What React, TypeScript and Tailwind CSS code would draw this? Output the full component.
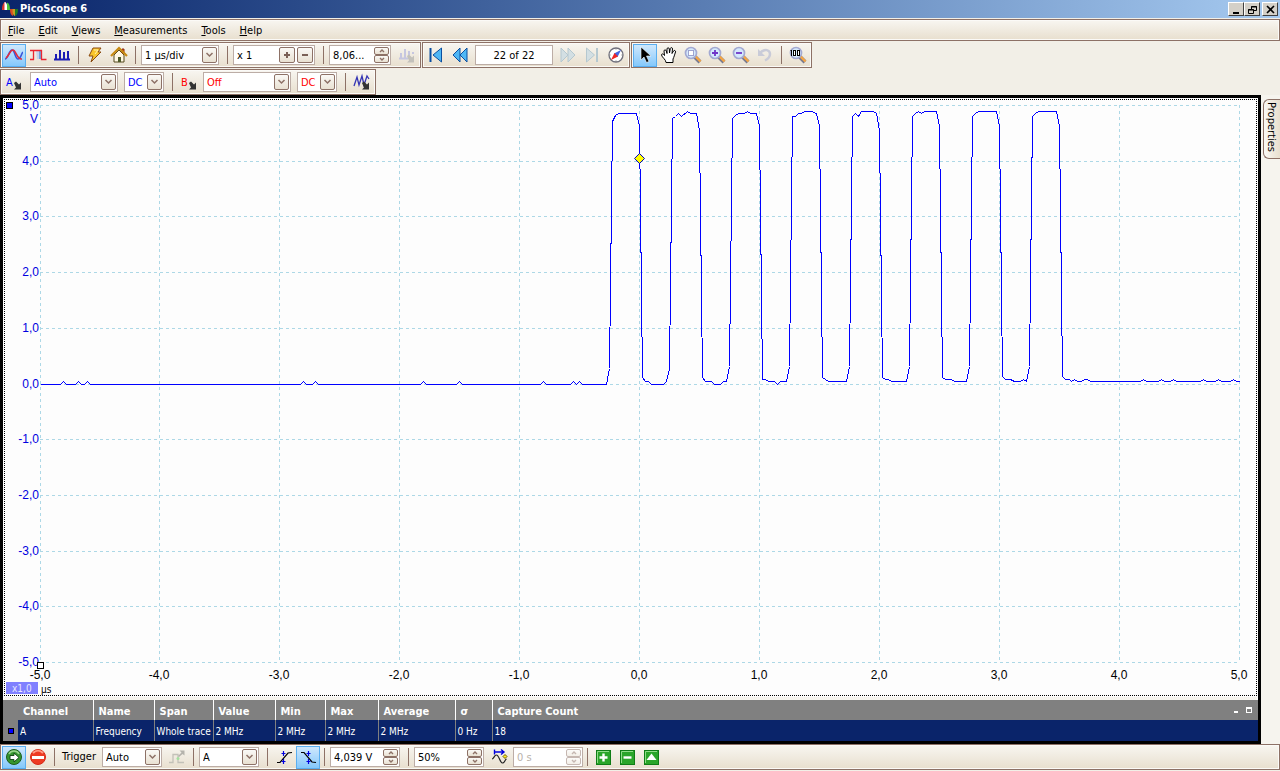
import React from 'react'
import clsx from 'clsx'

/* ---------- Chart data (sample points on the scope canvas) ---------- */

const BLIPS_BEFORE = [63, 78, 87, 303, 315, 423, 459, 543, 573, 579]
const BLIPS_AFTER = [1143, 1161, 1173, 1203, 1218, 1233]

const PULSES = [
    [606, 384, 609, 368, 612, 121, 615, 115, 618, 113, 636, 113, 639, 126, 642, 377, 645, 381, 648, 381, 651, 384, 663, 384],
    [666, 381, 669, 368, 672, 118, 675, 116, 678, 113, 681, 116, 687, 111, 690, 113, 696, 113, 699, 130, 702, 377, 705, 381, 711, 381, 714, 384, 720, 384, 723, 381],
    [726, 381, 729, 366, 732, 118, 735, 115, 738, 113, 744, 113, 747, 111, 750, 113, 756, 113, 759, 126, 762, 379, 765, 379, 768, 381, 774, 381, 777, 384, 780, 381],
    [786, 381, 789, 366, 792, 116, 795, 116, 798, 113, 801, 113, 804, 111, 811, 111, 816, 113, 819, 126, 822, 377, 825, 379, 828, 381],
    [846, 381, 849, 366, 852, 116, 855, 113, 858, 116, 861, 111, 873, 111, 876, 113, 879, 130, 882, 377, 885, 379, 888, 379, 891, 381],
    [906, 381, 909, 366, 912, 116, 915, 113, 918, 111, 921, 113, 924, 111, 936, 111, 939, 126, 942, 377, 945, 379, 951, 379, 954, 381],
    [966, 381, 969, 366, 972, 116, 975, 113, 978, 111, 996, 111, 999, 126, 1002, 376, 1005, 379, 1010, 379, 1014, 381, 1020, 381, 1023, 379],
    [1026, 381, 1029, 366, 1032, 116, 1035, 113, 1038, 111, 1056, 111, 1059, 126, 1062, 376, 1065, 379, 1069, 379, 1071, 381, 1074, 379, 1077, 381, 1081, 381, 1084, 379, 1087, 379, 1090, 381],
]

function tracePoints() {
    const pts: number[] = [40, 384]
    BLIPS_BEFORE.forEach((x) => pts.push(x - 3, 384, x, 381, x + 3, 384))
    PULSES.forEach((p) => pts.push(...p))
    BLIPS_AFTER.forEach((x) => pts.push(x - 3, 381, x, 379, x + 3, 381))
    pts.push(1239, 381)
    return pts.map((v) => v + 0.5).join(' ')
}

const X_TICKS = [-5, -4, -3, -2, -1, 0, 1, 2, 3, 4, 5].map((v, i) => ({
    label: `${v},0`,
    pos: Math.floor(40 + i * 119.95),
}))
const Y_TICKS = [5, 4, 3, 2, 1, 0, -1, -2, -3, -4, -5].map((v, i) => ({
    label: `${v},0`,
    pos: Math.round(105 + i * 55.7),
}))

const COLUMNS = [
    { head: 'Channel', value: 'A', width: 'w-[75px]' },
    { head: 'Name', value: 'Frequency', width: 'w-[61px]' },
    { head: 'Span', value: 'Whole trace', width: 'w-[59px]' },
    { head: 'Value', value: '2 MHz', width: 'w-[62px]' },
    { head: 'Min', value: '2 MHz', width: 'w-[50px]' },
    { head: 'Max', value: '2 MHz', width: 'w-[53px]' },
    { head: 'Average', value: '2 MHz', width: 'w-[77px]' },
    { head: 'σ', value: '0 Hz', width: 'w-[37px]' },
    { head: 'Capture Count', value: '18', width: '' },
]

/* ---------- Toolbar building blocks ---------- */

function Toolbar({ label, className, children }: { label: string; className?: string; children: React.ReactNode }) {
    return (
        <div
            role="toolbar"
            aria-label={label}
            className={clsx(
                'flex h-[26px] shrink-0 items-center border border-[#8d7166] bg-gradient-to-b from-[#f8f6f1] to-[#e8dfce] px-px shadow-[inset_0_0_0_1px_#fbfaf7]',
                className
            )}
        >
            {children}
        </div>
    )
}

function ToolButton({ label, active, disabled, children }: { label: string; active?: boolean; disabled?: boolean; children: React.ReactNode }) {
    return (
        <button
            type="button"
            aria-label={label}
            disabled={disabled}
            className={clsx(
                'flex h-[23px] w-6 shrink-0 items-center justify-center border',
                active ? 'border-[#5aaef0] bg-gradient-to-b from-[#cfe8fc] to-[#84c8fb]' : 'border-transparent'
            )}
        >
            <svg width="18" height="18" viewBox="0 0 18 18" fill="none">
                {children}
            </svg>
        </button>
    )
}

function Separator() {
    return <span className="mx-1 h-[18px] w-px shrink-0 bg-[#8d7166]" />
}

const BOX = 'relative flex h-5 shrink-0 items-center border border-[#bcada6] bg-white'
const MINI = 'flex items-center justify-center rounded-[2px] border border-[#8d7166] bg-gradient-to-b from-[#faf9f6] to-[#e9e1d2]'

function Combo({ id, label, value, className }: { id?: string; label?: string; value: string; className: string }) {
    return (
        <div className={clsx(BOX, className)}>
            <select id={id} aria-label={label} defaultValue={value} className="h-full w-full appearance-none bg-transparent pt-px pl-[3px] outline-none">
                <option>{value}</option>
            </select>
            <span className={clsx(MINI, 'pointer-events-none absolute right-px h-4 w-[15px]')}>
                <svg width="9" height="6" viewBox="0 0 9 6" fill="none" stroke="#8d7166" strokeWidth="1.5">
                    <path d="M1.5 1l3 3 3-3" />
                </svg>
            </span>
        </div>
    )
}

function Spinner({ label, value, disabled, className }: { label: string; value: string; disabled?: boolean; className: string }) {
    return (
        <div className={clsx(BOX, className, disabled && 'bg-[#f4f1eb] text-[#b9b2aa]')}>
            <input aria-label={label} defaultValue={value} disabled={disabled} className="h-full w-0 flex-1 bg-transparent pl-[3px] outline-none" />
            <div className={clsx('mr-px flex w-[15px] flex-col', disabled && 'opacity-50')}>
                {['M1 3l2-2 2 2', 'M1 1l2 2 2-2'].map((d) => (
                    <button key={d} type="button" disabled={disabled} aria-label={`${label} step`} className={clsx(MINI, 'h-2')}>
                        <svg width="6" height="4" viewBox="0 0 6 4" fill="none" stroke="#8d7166">
                            <path d={d} strokeWidth="1.4" />
                        </svg>
                    </button>
                ))}
            </div>
        </div>
    )
}

/* ---------- Icons ---------- */

function Magnifier({ children }: { children?: React.ReactNode }) {
    return (
        <>
            <path d="M10.500 10.500L16 16" stroke="#777a90" strokeWidth="4" />
            <path d="M11.500 10.500l5 5" stroke="#f5a544" strokeWidth="2.400" />
            <circle cx="7" cy="7" r="5.500" fill="#d4e9fd" stroke="#a3a9d2" strokeWidth="1.700" />
            {children}
        </>
    )
}

function ProbeArrow({ fill = '#333' }: { fill?: string }) {
    return <path d="M9 10l2-1.500 3 3 2-2v7H9l2-2z" fill={fill} />
}

function GreenBox({ children }: { children: React.ReactNode }) {
    return (
        <>
            <rect x="1.500" y="2.500" width="14" height="14" fill="#2aa52a" stroke="#0f7d16" />
            <path d="M2.500 15V3.500H14" stroke="#8fdc88" />
            {children}
        </>
    )
}

function AppLogo() {
    return (
        <svg width="16" height="16" viewBox="0 0 16 16">
            <path d="M0 9Q0 1 4 1v8z" fill="#d9342b" />
            <path d="M2.500 9V1q3 0 3 8z" fill="#fff" />
            <path d="M5 9V1.500Q8 2 8 9z" fill="#4cc43a" />
            <path d="M8 8h3v7Q8 14 8 8z" fill="#d94a22" />
            <path d="M10.500 8h2.500v7q-2.500 0-2.500-7z" fill="#c99a22" />
            <path d="M13 8h3q0 6-3 7z" fill="#1d7a25" />
        </svg>
    )
}

/* ---------- Sections ---------- */

function TitleBar() {
    return (
        <header className="flex h-[18px] shrink-0 items-center bg-gradient-to-r from-[#0a246a] to-[#a6caf0] pr-0.5 pl-0.5 text-white">
            <AppLogo />
            <h1 className="ml-0.5 flex-1 font-bold">PicoScope 6</h1>
            {[
                { label: 'Minimize', d: 'M3 9h6', w: 2, ml: '' },
                { label: 'Restore', d: 'M5.5 5V2.5h5v4H8M5 3h6M2.5 5.5h5v4h-5zM2 6h6', w: 1, ml: '' },
                { label: 'Close', d: 'M3 2l7 7M10 2L3 9', w: 1.6, ml: 'ml-0.5' },
            ].map((b) => (
                <button
                    key={b.label}
                    type="button"
                    aria-label={b.label}
                    className={clsx('flex h-3.5 w-4 items-center justify-center border border-t-white border-r-[#404040] border-b-[#404040] border-l-white bg-[#d4d0c8]', b.ml)}
                >
                    <svg width="13" height="11" viewBox="0 0 13 11" fill="none" stroke="#000" strokeWidth={b.w}>
                        <path d={b.d} />
                    </svg>
                </button>
            ))}
        </header>
    )
}

function MenuBar() {
    return (
        <nav className="mt-px flex h-[22px] shrink-0 items-center gap-3.5 border border-[#8d7166] bg-gradient-to-b from-[#f8f6f1] to-[#e8dfce] pt-0.5 pl-[7px] shadow-[inset_0_0_0_1px_#fbfaf7]">
            {['File', 'Edit', 'Views', 'Measurements', 'Tools', 'Help'].map((item) => (
                <a key={item} href="#">
                    <span className="underline">{item[0]}</span>
                    {item.slice(1)}
                </a>
            ))}
        </nav>
    )
}

function CaptureToolbar() {
    return (
        <Toolbar label="Capture setup">
            <ToolButton label="Scope mode" active>
                <path d="M0 13C3 13 4 4 7 4s3 9 6 9 3-5 5-7" stroke="#3a55d8" strokeWidth="1.6" />
                <path d="M1 12C4 10 5 4 8 4s4 10 9 9" stroke="#e22b3c" strokeWidth="1.6" />
            </ToolButton>
            <ToolButton label="Persistence mode">
                <path d="M9 4h4v9h-4z" fill="#6fa5dc" />
                <path d="M7 4h3v9H8z" fill="#c5d3ea" />
                <path d="M1 4.500h12M4.500 4v10M1 13.500h4M12.500 4v9.500h5" stroke="#ea2630" strokeWidth="1.300" />
            </ToolButton>
            <ToolButton label="Spectrum mode">
                <path d="M1 13.500h16M3 13V8M7 13V4M11 13V6M15 13V5" stroke="#1c1cb4" strokeWidth="2" />
            </ToolButton>
            <Separator />
            <ToolButton label="Auto setup">
                <path d="M7 2h8l-3 4h3L5 16l2-6H3z" fill="#f9c52b" stroke="#8a4b12" />
                <path d="M8 4h4L9 8" stroke="#fff3b0" />
            </ToolButton>
            <ToolButton label="Home">
                <path d="M4 9v7h10V9L9 4z" fill="#fff8e4" stroke="#55481d" />
                <path d="M12 3h2v4h-2z" fill="#d8502c" stroke="#8b2a10" />
                <path d="M1 10l8-8 8 8" stroke="#c68a12" strokeWidth="2.2" />
                <path d="M8 11h3v5H8z" fill="#4d5a28" />
            </ToolButton>
            <Separator />
            <Combo label="Timebase" value="1 µs/div" className="mr-1 ml-px w-[78px]" />
            <Separator />
            <div className={clsx(BOX, 'mr-1 ml-px w-[82px] gap-0.5 pr-px')}>
                <input aria-label="Horizontal zoom" defaultValue="x 1" className="h-full w-0 flex-1 bg-transparent pl-[3px] outline-none" />
                <button type="button" aria-label="Zoom more" className={clsx(MINI, 'h-4 w-4')}>
                    <svg width="8" height="8" viewBox="0 0 8 8" stroke="#7a6056" strokeWidth="2"><path d="M4 1v6M1 4h6" /></svg>
                </button>
                <button type="button" aria-label="Zoom less" className={clsx(MINI, 'h-4 w-4')}>
                    <svg width="8" height="8" viewBox="0 0 8 8" stroke="#7a6056" strokeWidth="2"><path d="M1 4h6" /></svg>
                </button>
            </div>
            <Separator />
            <Spinner label="Samples" value="8,06..." className="mr-1 ml-px w-[62px]" />
            <ToolButton label="Spectrum options" disabled>
                <path d="M1 12.500h9M3 12V7M7 12V3M11 9V5M15 8V6" stroke="#c6c6e0" strokeWidth="2" />
                <ProbeArrow fill="#c3c1bb" />
            </ToolButton>
        </Toolbar>
    )
}

function BufferToolbar() {
    return (
        <Toolbar label="Buffer navigation">
            <ToolButton label="First buffer">
                <path d="M3.500 2v14" stroke="#0b4fa0" strokeWidth="2" />
                <path d="M14.500 2v14L6 9z" fill="#4fb7f5" stroke="#0b4fa0" />
            </ToolButton>
            <ToolButton label="Previous buffer">
                <path d="M9 2v14L2 9zM16 2v14L9 9z" fill="#4fb7f5" stroke="#0b4fa0" />
            </ToolButton>
            <input aria-label="Buffer" defaultValue="22 of 22" className="mx-[3px] h-5 w-[78px] border border-[#bcada6] bg-white text-center outline-none" />
            <ToolButton label="Next buffer" disabled>
                <path d="M2 2v14l7-7zM9 2v14l7-7z" fill="#d3dfe3" stroke="#b5c8d0" />
            </ToolButton>
            <ToolButton label="Last buffer" disabled>
                <path d="M3.500 2v14l8-7z" fill="#d3dfe3" stroke="#b5c8d0" />
                <path d="M14 2v14" stroke="#b5c8d0" strokeWidth="2" />
            </ToolButton>
            <ToolButton label="Buffer navigator">
                <circle cx="9" cy="9" r="7" fill="#fff" stroke="#6f6f7c" strokeWidth="1.3" />
                <path d="M14 4l-3.500 7L7 7.500z" fill="#4464e0" />
                <path d="M4 14l3.500-7L11 10.500z" fill="#ee2424" />
                <path d="M9 2.500v1M9 14.500v1M2.500 9h1M14.500 9h1" stroke="#777" />
            </ToolButton>
        </Toolbar>
    )
}

function ZoomToolbar() {
    return (
        <Toolbar label="Zoom and scroll">
            <ToolButton label="Select" active>
                <path d="M5 1v13l3-3 2.500 5.500 2.500-1L10.500 10H15z" fill="#000" stroke="#fff" strokeWidth="0.6" />
            </ToolButton>
            <ToolButton label="Hand">
                <path d="M6 16.500c0-3-4-5-4.500-7.500 0-1.500 2-1.500 3 .500L4 5c0-1.500 2-1.500 2.300 0L7 7.500V3c0-1.600 2.200-1.600 2.300 0l.2 4 .8-4.500c.4-1.400 2.400-1 2.200.5L12 7.500l1.500-2.500c.8-1.200 2.500-.3 2 1-1 3-1.500 5-2.500 7v3.500z" fill="#fff" stroke="#000" />
            </ToolButton>
            <ToolButton label="Marquee zoom">
                <Magnifier><rect x="4.500" y="4.500" width="5" height="5" fill="#fff" stroke="#5555a0" strokeDasharray="1 1" /></Magnifier>
            </ToolButton>
            <ToolButton label="Zoom in">
                <Magnifier><path d="M7 4v6M4 7h6" stroke="#6f35c8" strokeWidth="1.800" /></Magnifier>
            </ToolButton>
            <ToolButton label="Zoom out">
                <Magnifier><path d="M4 7h6" stroke="#6f35c8" strokeWidth="1.800" /></Magnifier>
            </ToolButton>
            <ToolButton label="Undo zoom" disabled>
                <path d="M4 7c5-5 10-3 10 1 0 3-2 5-5 6.500" stroke="#c9cbd8" strokeWidth="2.500" />
                <path d="M2 3v7h7z" fill="#c9cbd8" />
            </ToolButton>
            <Separator />
            <ToolButton label="Zoom to 100">
                <Magnifier>
                    <path d="M2.500 4v6M1.500 4.500h1" stroke="#000" />
                    <rect x="4.500" y="4.500" width="2" height="5" fill="#fff" stroke="#000" />
                    <rect x="8.500" y="4.500" width="2" height="5" fill="#fff" stroke="#000" />
                </Magnifier>
            </ToolButton>
        </Toolbar>
    )
}

function ChannelIcon({ name, color }: { name: string; color: string }) {
    return (
        <button type="button" aria-label={`Channel ${name} options`} className="flex h-[23px] w-6 shrink-0 items-center justify-center">
            <svg width="18" height="18" viewBox="0 0 18 18">
                <text x="1" y="13" fontSize="11" fill={color}>{name}</text>
                <ProbeArrow />
            </svg>
        </button>
    )
}

function ChannelToolbar() {
    return (
        <Toolbar label="Channel setup" className="self-start">
            <ChannelIcon name="A" color="#0000ff" />
            <Combo label="Channel A range" value="Auto" className="mr-1.5 ml-1 w-[88px] text-[#0000ff]" />
            <Combo label="Channel A coupling" value="DC" className="mr-1 w-10 text-[#0000ff]" />
            <Separator />
            <ChannelIcon name="B" color="#ff0000" />
            <Combo label="Channel B range" value="Off" className="mr-1.5 ml-0.5 w-[88px] text-[#ff0000]" />
            <Combo label="Channel B coupling" value="DC" className="mr-1 w-10 text-[#ff0000]" />
            <Separator />
            <ToolButton label="Math channels">
                <path d="M1 13L4 4l2 8 3-9 2 9 3-9 2 3" stroke="#3434b4" strokeWidth="1.300" />
                <ProbeArrow />
            </ToolButton>
        </Toolbar>
    )
}

function ScopeView() {
    return (
        <section aria-label="Scope view" className="flex min-h-0 flex-1 flex-col bg-[#fdfdfd] px-px pt-px">
            <div className="min-h-0 flex-1 border border-dotted border-black">
                <svg className="block h-full w-full overflow-visible text-xs" viewBox="5 100 1251 595">
                    <g stroke="#add8e6" strokeDasharray="3 3" shapeRendering="crispEdges">
                        {X_TICKS.map((t) => (
                            <line key={t.label} x1={t.pos + 0.5} x2={t.pos + 0.5} y1="105" y2="662" />
                        ))}
                        {Y_TICKS.map((t) => (
                            <line key={t.label} x1="40" x2="1240" y1={t.pos + 0.5} y2={t.pos + 0.5} />
                        ))}
                    </g>
                    <g fill="#0000e0" textAnchor="end" className="font-['Liberation_Sans',sans-serif]">
                        {Y_TICKS.map((t) => (
                            <text key={t.label} x="39" y={t.pos + 4}>{t.label}</text>
                        ))}
                        <text x="38" y="123">V</text>
                    </g>
                    <g textAnchor="middle" className="font-['Liberation_Sans',sans-serif]">
                        {X_TICKS.map((t) => (
                            <text key={t.label} x={t.pos} y="679">{t.label}</text>
                        ))}
                    </g>
                    <polyline points={tracePoints()} fill="none" stroke="#0000ff" shapeRendering="crispEdges" />
                    <path d="M639.500 153.500l5 5-5 5-5-5z" fill="#ffff00" stroke="#0000c0" />
                    <rect x="6.500" y="102.500" width="6" height="6" fill="#0000ff" stroke="#000" />
                    <rect x="37.500" y="662.500" width="6" height="6" fill="#fff" stroke="#000" />
                    <rect x="6" y="682" width="32" height="12" fill="#8080ff" />
                    <text x="12" y="692" fontSize="10" fill="#e6e6ff">x1,0</text>
                    <text x="41" y="693" fontSize="10">µs</text>
                </svg>
            </div>
            <div className="mt-px h-[3px] shrink-0 bg-[#f6f4ee]" />
        </section>
    )
}

function MeasurementsTable() {
    return (
        <table className="w-full shrink-0 table-fixed border-collapse bg-[#808080] text-left text-white">
            <thead>
                <tr className="h-5">
                    <th className="w-[15px]" aria-label="Marker" />
                    {COLUMNS.map((c, i) => (
                        <th key={c.head} className={clsx('p-0 pt-[3px] pl-[5px] font-bold', c.width, i > 0 && 'border-l border-white')}>
                            {c.head}
                        </th>
                    ))}
                    <th className="w-[30px] p-0">
                        <div className="flex items-center justify-center gap-2">
                            <button type="button" aria-label="Minimize table" className="mt-1 h-0.5 w-1 bg-white" />
                            <button type="button" aria-label="Maximize table" className="h-1.5 w-1.5 border border-t-2 border-white" />
                        </div>
                    </th>
                </tr>
            </thead>
            <tbody>
                <tr className="h-[21px] bg-[#0a246a] text-[10px]">
                    <td className="bg-[#808080] p-0">
                        <span className="mx-auto block h-1.5 w-1.5 border border-black bg-[#0000ff]" />
                    </td>
                    {COLUMNS.map((c, i) => (
                        <td key={c.head} className={clsx('p-0 pt-0.5 pl-0.5 whitespace-nowrap', i > 0 && 'border-l border-[#808080]')}>
                            {c.value}
                        </td>
                    ))}
                    <td />
                </tr>
            </tbody>
        </table>
    )
}

function TriggerToolbar() {
    return (
        <Toolbar label="Trigger" className="mb-px">
            <ToolButton label="Start capturing" active>
                <circle cx="9" cy="9" r="7.500" fill="#35962f" stroke="#1c5c1c" />
                <path d="M4 6c2-4 8-4 10 0" stroke="#9bd68c" strokeWidth="1.500" />
                <path d="M5 7.500h4V5l5 4.500L9 14v-2.500H5z" fill="#fff" stroke="#194d19" />
            </ToolButton>
            <ToolButton label="Stop capturing">
                <circle cx="9" cy="9" r="7.500" fill="#ee3b23" stroke="#d52a18" />
                <path d="M4 5c3-3 7-3 10 0" stroke="#ff9b86" strokeWidth="2" />
                <rect x="3" y="8" width="12" height="3" fill="#fff" />
            </ToolButton>
            <Separator />
            <label htmlFor="trigger-mode" className="ml-[3px] w-10">Trigger</label>
            <Combo id="trigger-mode" value="Auto" className="mr-[3px] w-[60px]" />
            <ToolButton label="Advanced triggering" disabled>
                <path d="M1 14.500h4v-8h5v8h6" stroke="#c3c1b8" strokeWidth="1.300" />
                <path d="M10 8l3.500-3.500-2-2h5v5l-2-1.500L11 9z" fill="#b5b3ac" />
                <circle cx="10" cy="10.500" r="1.500" fill="#a5e0a0" />
            </ToolButton>
            <Separator />
            <Combo label="Trigger channel" value="A" className="mr-1 ml-px w-[60px]" />
            <Separator />
            <ToolButton label="Rising edge">
                <path d="M2 14.500h3L13 5l4-.500" stroke="#000" strokeWidth="1.200" />
                <path d="M8.500 3v5M8.500 11v5M6.500 5.500h4M6.500 13.500h4" stroke="#0000e0" strokeWidth="1.200" />
            </ToolButton>
            <ToolButton label="Falling edge" active>
                <path d="M2 4.500h3L13 14l4 .500" stroke="#000" strokeWidth="1.200" />
                <path d="M9.500 3v5M9.500 11v5M7.500 5.500h4M7.500 13.500h4" stroke="#0000e0" strokeWidth="1.200" />
            </ToolButton>
            <Separator />
            <Spinner label="Threshold" value="4,039 V" className="mr-1 ml-px w-[70px]" />
            <Separator />
            <Spinner label="Pre-trigger" value="50%" className="mr-1 ml-px w-[70px]" />
            <ToolButton label="Trigger delay">
                <path d="M1 11c2 0 2-4 4.500-4S9 15 11.500 15s2-3 4-4" stroke="#222" strokeWidth="1.200" />
                <path d="M3.500 1.500v5M3 4h9M10 1.500l3 2.500-3 2.500" stroke="#0000e0" strokeWidth="1.400" />
                <path d="M14 6.500l2 2-2 2-2-2z" fill="#ffee22" stroke="#665500" />
            </ToolButton>
            <Spinner label="Delay" value="0 s" disabled className="ml-px w-[70px]" />
            <Separator />
            <ToolButton label="Add measurement">
                <GreenBox><path d="M8.500 5.500v8M4.500 9.500h8" stroke="#fff" strokeWidth="2.400" /></GreenBox>
            </ToolButton>
            <ToolButton label="Delete measurement">
                <GreenBox><path d="M4.500 9.500h8" stroke="#fff" strokeWidth="2.400" /></GreenBox>
            </ToolButton>
            <ToolButton label="Edit measurement">
                <GreenBox><path d="M8.500 5.500l5 6.500h-10z" fill="#fff" /></GreenBox>
            </ToolButton>
        </Toolbar>
    )
}

export default function App() {
    return (
        <div className="flex h-screen flex-col overflow-hidden bg-[#f2efe7] font-['DejaVu_Sans_Condensed','DejaVu_Sans',sans-serif] text-[11px] leading-[14px] text-black">
            <TitleBar />
            <MenuBar />
            <div className="mt-px flex gap-px">
                <CaptureToolbar />
                <BufferToolbar />
                <ZoomToolbar />
            </div>
            <div className="mt-px flex">
                <ChannelToolbar />
            </div>
            <main className="flex min-h-0 flex-1">
                <div className="flex min-w-0 flex-1 flex-col border-[3px] border-black">
                    <ScopeView />
                    <MeasurementsTable />
                </div>
                <aside className="w-[19px] shrink-0 bg-[#f6f4ee] pt-1 pl-0.5">
                    <button
                        type="button"
                        className="flex h-[60px] w-full items-center rounded-l-md border border-r-0 border-[#8d7166] bg-gradient-to-r from-[#faf8f4] to-[#e8dfce] pt-0.5 pr-0.5 [writing-mode:vertical-rl]"
                    >
                        Properties
                    </button>
                </aside>
            </main>
            <TriggerToolbar />
        </div>
    )
}
